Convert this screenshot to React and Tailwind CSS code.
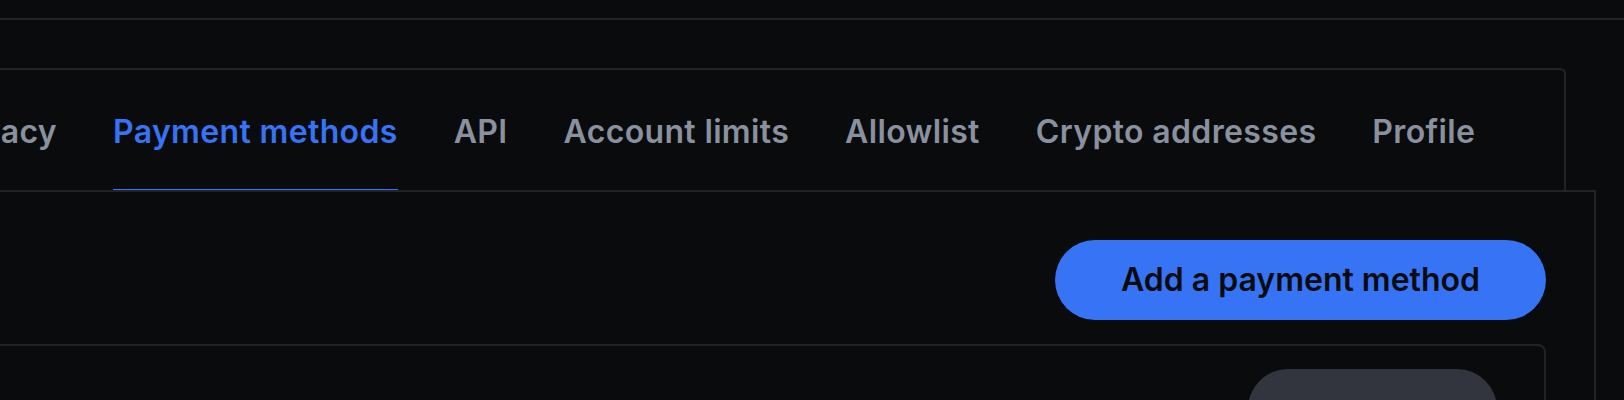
import React from "react";

const tabs = ["Payment methods", "API", "Account limits", "Allowlist", "Crypto addresses", "Profile"];

const App = () => {
  const active = "Payment methods";

  return (
    <div
      className="h-[400px] w-[1624px] overflow-hidden bg-[#0a0b0d] text-[32px] font-semibold"
      style={{ fontFamily: "Inter, 'Noto Sans', sans-serif" }}
    >
      {/* top bar */}
      <div className="h-[20px] border-b-2 border-[#222327]"></div>

      {/* settings tabs */}
      <div className="mt-[48px] ml-[-20px] w-[1586px] h-[122px] rounded-tr-[6px] border-t-2 border-r-2 border-[#222327]">
        <div className="flex h-[120px] items-stretch gap-[56px] pl-[20px] tracking-[0.35px]">
          <div className="flex w-[57px] items-center justify-end overflow-hidden pt-[4px]">
            <span className="whitespace-nowrap text-[#8a919e]">Privacy</span>
          </div>
          {tabs.map((tab) => (
            <div
              key={tab}
              className={
                tab === active
                  ? "flex items-center whitespace-nowrap border-b-[1.5px] border-[#3773f5] pt-[4px] text-[#3773f5]"
                  : "flex items-center whitespace-nowrap border-b-[1.5px] border-transparent pt-[4px] text-[#8a919e]"
              }
            >
              {tab}
            </div>
          ))}
        </div>
      </div>

      {/* payment methods panel */}
      <div className="ml-[-20px] w-[1616px] h-[300px] border-t-2 border-r-2 border-[#222327]">
        <div className="flex justify-end pt-[48px] pr-[48px]">
          <button className="h-[80px] w-[491px] rounded-full bg-[#3773f5] text-[#0a0b0d]">
            Add a payment method
          </button>
        </div>
        <div className="mt-[24px] mr-[48px] ml-[20px] h-[200px] rounded-tr-[8px] border-t-2 border-r-2 border-[#222327]">
          <div className="flex justify-end pt-[23px] pr-[47px]">
            <div className="h-[80px] w-[249px] rounded-full bg-[#32353d]"></div>
          </div>
        </div>
      </div>
    </div>
  );
};

export default App;
